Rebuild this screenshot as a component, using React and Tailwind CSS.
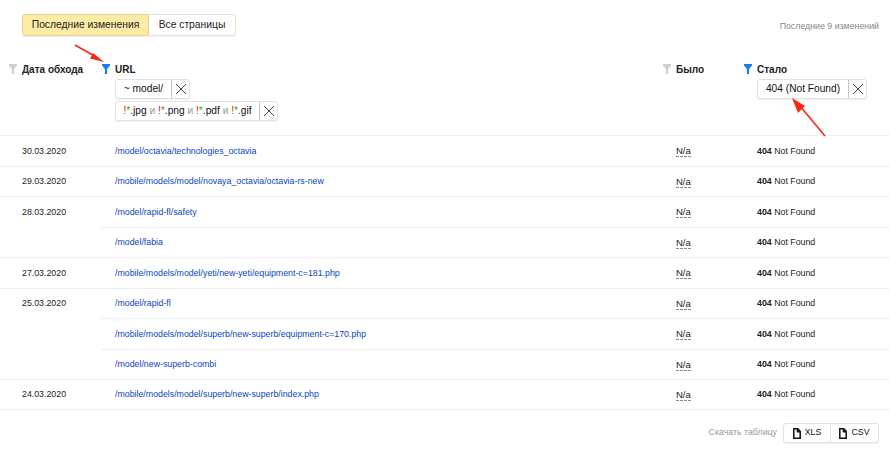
const rows = [
  { date: "30.03.2020", url: "/model/octavia/technologies_octavia", h: "h-[31px]" },
  { date: "29.03.2020", url: "/mobile/models/model/novaya_octavia/octavia-rs-new", h: "h-[30px]" },
  { date: "28.03.2020", url: "/model/rapid-fl/safety", h: "h-[31px]", inner: true },
  { date: "", url: "/model/fabia", h: "h-[30px]" },
  { date: "27.03.2020", url: "/mobile/models/model/yeti/new-yeti/equipment-c=181.php", h: "h-[31px]" },
  { date: "25.03.2020", url: "/model/rapid-fl", h: "h-[30px]", inner: true },
  { date: "", url: "/mobile/models/model/superb/new-superb/equipment-c=170.php", h: "h-[31px]", inner: true },
  { date: "", url: "/model/new-superb-combi", h: "h-[30px]" },
  { date: "24.03.2020", url: "/mobile/models/model/superb/new-superb/index.php", h: "h-[30px]" },
];

function Funnel({ on }) {
  return (
    <svg width="8" height="10" viewBox="0 0 8 10" className="shrink-0">
      <path d="M0 0H8V1.4L5.1 5V10H2.9V5L0 1.4Z" fill={on ? "#1a7cf0" : "#cfcfcf"} />
    </svg>
  );
}

function Cross() {
  return (
    <svg width="12" height="12" viewBox="0 0 12 12">
      <path d="M1 1L11 11M11 1L1 11" stroke="#444" strokeWidth="1" fill="none" />
    </svg>
  );
}

function Chip({ children, w }) {
  return (
    <div className="flex h-[20px] rounded-[3px] border border-[#e2e2e2] bg-white shadow-[0_1px_1px_rgba(0,0,0,0.06)]">
      <div className={`flex items-center justify-center ${w} text-[10.2px] text-[#111] whitespace-nowrap`}>{children}</div>
      <div className="flex w-[18px] items-center justify-center border-l border-[#c4c4c4]">
        <Cross />
      </div>
    </div>
  );
}

function Mask({ ext }) {
  return (
    <>
      <span className="text-[#e02020]">!</span>
      <span className="text-[#3aa52e]">*</span>
      {ext}
    </>
  );
}

function And() {
  return <span className="text-[#999]"> и </span>;
}

function Head({ on, children, className }) {
  return (
    <div className={`flex h-[10px] items-center ${className}`}>
      <Funnel on={on} />
      <span className="ml-[5px] text-[10px] font-bold text-[#222]">{children}</span>
    </div>
  );
}

function FileIcon() {
  return (
    <svg width="8" height="11" viewBox="0 0 8 11" className="shrink-0">
      <path d="M0.8 0.8H4.8L7.2 3.4V10.2H0.8Z" fill="none" stroke="#111" strokeWidth="1.5" />
      <path d="M4.2 1V4H7" fill="#111" stroke="#111" strokeWidth="1" />
    </svg>
  );
}

export default function App() {
  return (
    <div className="relative h-[449px] w-[889px] overflow-hidden bg-white font-['Liberation_Sans',Arial,sans-serif] text-[#222]">
      <div className="flex items-start justify-between pl-[22px] pr-[10px] pt-[14px]">
        <div className="flex h-[22px] rounded-[3px] text-[10.3px] shadow-[0_1px_1px_rgba(0,0,0,0.06)]">
          <div className="flex w-[127px] items-center justify-center whitespace-nowrap rounded-l-[3px] border border-[#e3d59a] bg-[#fdeba6] text-[#222]">Последние изменения</div>
          <div className="flex w-[87px] items-center justify-center whitespace-nowrap rounded-r-[3px] border border-l-0 border-[#e2e2e2] bg-white text-[#222]">Все страницы</div>
        </div>
        <div className="pt-[6px] text-[8.8px] text-[#888]">Последние 9 изменений</div>
      </div>

      <div className="mt-[27px] flex h-[73px] items-start border-b border-[#eeeeee] pl-[9px]">
        <Head on={false} className="mt-[1px] w-[93px]">Дата обхода</Head>
        <div className="flex w-[561px] flex-col items-start">
          <Head on={true} className="mt-[1px]">URL</Head>
          <div className="ml-[13px] mt-[5px]">
            <Chip w="w-[55px]">~ model/</Chip>
          </div>
          <div className="ml-[13px] mt-[2px]">
            <Chip w="w-[143px]">
              <span className="whitespace-pre">
                <Mask ext=".jpg" /><And /><Mask ext=".png" /><And /><Mask ext=".pdf" /><And /><Mask ext=".gif" />
              </span>
            </Chip>
          </div>
        </div>
        <Head on={false} className="mt-[1px] w-[81px]">Было</Head>
        <div className="flex flex-col items-start">
          <Head on={true} className="mt-[1px]">Стало</Head>
          <div className="ml-[13px] mt-[5px]">
            <Chip w="w-[90px]">404 (Not Found)</Chip>
          </div>
        </div>
      </div>

      <div>
        {rows.map((r, i) => (
          <div key={i} className="relative flex text-[8.8px]">
            <div className={`flex ${r.h} w-full items-center`}>
              <div className="w-[115px] shrink-0 pl-[22px] text-[#222]">{r.date}</div>
              <a className="w-[561px] shrink-0 text-[#0a45c0]">{r.url}</a>
              <div className="w-[81px] shrink-0">
                <span className="border-b border-dashed border-[#888] text-[9.5px] text-[#222]">N/a</span>
              </div>
              <div className="whitespace-nowrap"><b>404</b> Not Found</div>
            </div>
            <div className={`absolute bottom-0 right-0 h-px bg-[#eeeeee] ${r.inner ? "left-[101px]" : "left-0"}`} />
          </div>
        ))}
      </div>

      <div className="mt-[13px] flex items-center justify-end pr-[10px]">
        <span className="mr-[6px] text-[8.8px] text-[#999]">Скачать таблицу</span>
        <div className="flex h-[20px] rounded-[3px] border border-[#e2e2e2] bg-white text-[8.8px] text-[#111] shadow-[0_1px_1px_rgba(0,0,0,0.06)]">
          <div className="flex w-[46px] items-center justify-center gap-[4px]"><FileIcon />XLS</div>
          <div className="flex w-[48px] items-center justify-center gap-[4px] border-l border-[#e2e2e2]"><FileIcon />CSV</div>
        </div>
      </div>

      <svg className="pointer-events-none absolute left-0 top-0" width="889" height="449" viewBox="0 0 889 449">
        <path d="M75 45L97 57.5" stroke="#f52a12" strokeWidth="1.6" fill="none" />
        <path d="M104 62L90 58.5L93 53Z" fill="#f52a12" />
        <path d="M825 136L800 106" stroke="#f52a12" strokeWidth="1.6" fill="none" />
        <path d="M792 98L805 106L798 113Z" fill="#f52a12" />
      </svg>
    </div>
  );
}
